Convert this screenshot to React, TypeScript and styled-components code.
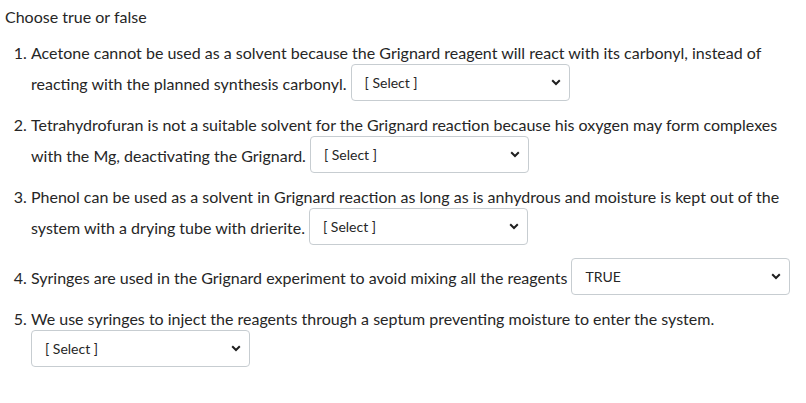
import React from "react";
import styled, { createGlobalStyle } from "styled-components";

const Global = createGlobalStyle`
  html, body { margin: 0; padding: 0; background: #fff; }
  body { font-family: Lato, "Open Sans", sans-serif; color: #262626; }
`;

const Page = styled.div`
  padding: 6px 5px 0 5px;
  font-size: 16px;
`;

const Title = styled.div`
  line-height: 22px;
  margin-bottom: 14px;
`;

const List = styled.ol`
  margin: 0;
  padding-left: 26px;
  display: flex;
  flex-direction: column;
  gap: 13px;
`;

const Item = styled.li``;

const TextLine = styled.div`
  line-height: 22px;
  white-space: nowrap;
`;

const SelectLine = styled.div`
  display: flex;
  align-items: flex-end;
  gap: 4px;
  white-space: nowrap;
`;

const LineText = styled.span`
  line-height: 34px;
`;

const SelectBox = styled.div`
  box-sizing: border-box;
  width: 219px;
  height: 37px;
  border: 1px solid #c7cdd1;
  border-radius: 4px;
  background: #fff;
  display: flex;
  align-items: center;
  justify-content: space-between;
  padding: 0 8px 0 13px;
  font-size: 14px;
  color: #262626;
  line-height: 35px;
`;

const Chevron = () => (
  <svg width="10" height="7" viewBox="0 0 10 7" aria-hidden>
    <path d="M1.2 1.3 L5 5 L8.8 1.3" fill="none" stroke="#1f1f1f" strokeWidth="2" />
  </svg>
);

const Select = ({ value }: { value: string }) => (
  <SelectBox>
    <span>{value}</span>
    <Chevron />
  </SelectBox>
);

export default function App() {
  return (
    <>
      <Global />
      <Page>
        <Title>Choose true or false</Title>
        <List>
          <Item>
            <TextLine>
              Acetone cannot be used as a solvent because the Grignard reagent will react with its carbonyl, instead of
            </TextLine>
            <SelectLine>
              <LineText>reacting with the planned synthesis carbonyl.</LineText>
              <Select value="[ Select ]" />
            </SelectLine>
          </Item>
          <Item>
            <TextLine>
              Tetrahydrofuran is not a suitable solvent for the Grignard reaction because his oxygen may form complexes
            </TextLine>
            <SelectLine>
              <LineText>with the Mg, deactivating the Grignard.</LineText>
              <Select value="[ Select ]" />
            </SelectLine>
          </Item>
          <Item>
            <TextLine>
              Phenol can be used as a solvent in Grignard reaction as long as is anhydrous and moisture is kept out of the
            </TextLine>
            <SelectLine>
              <LineText>system with a drying tube with drierite.</LineText>
              <Select value="[ Select ]" />
            </SelectLine>
          </Item>
          <Item>
            <SelectLine>
              <LineText>Syringes are used in the Grignard experiment to avoid mixing all the reagents</LineText>
              <Select value="TRUE" />
            </SelectLine>
          </Item>
          <Item>
            <TextLine>
              We use syringes to inject the reagents through a septum preventing moisture to enter the system.
            </TextLine>
            <SelectLine>
              <Select value="[ Select ]" />
            </SelectLine>
          </Item>
        </List>
      </Page>
    </>
  );
}
